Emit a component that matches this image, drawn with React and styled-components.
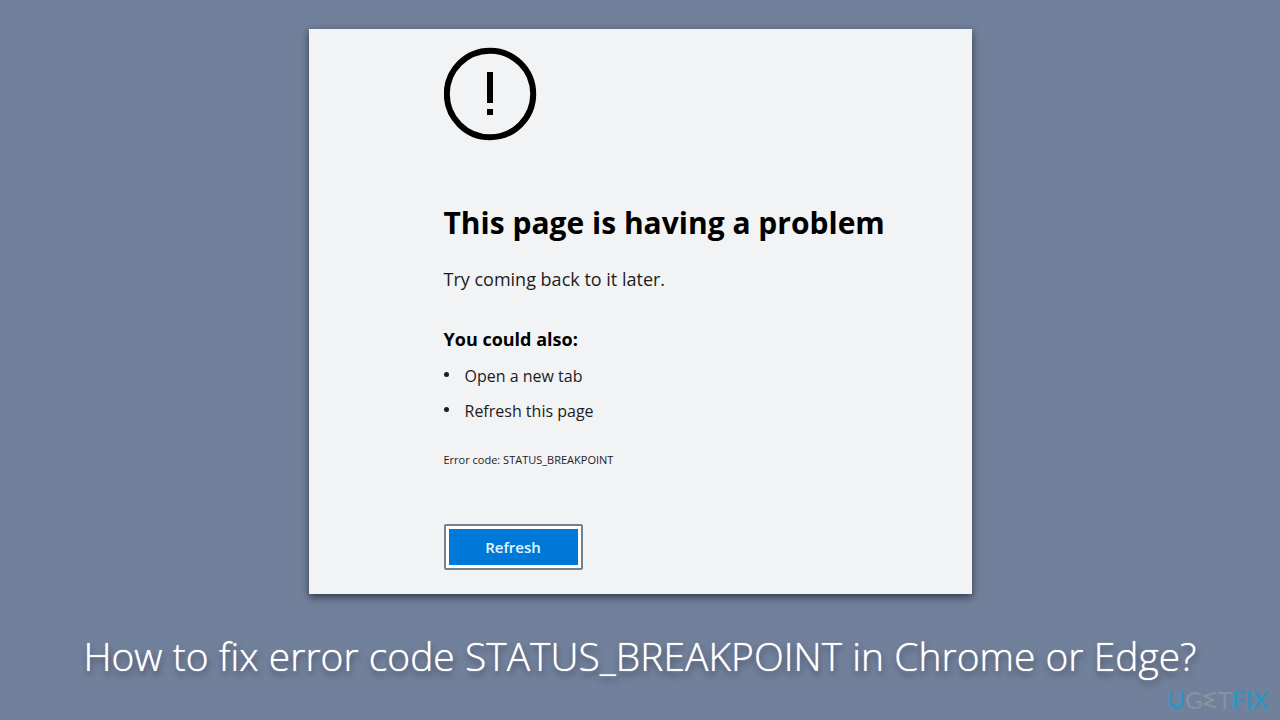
import React from 'react';
import styled, { createGlobalStyle } from 'styled-components';

function App () {
    return (
        <>
            <GlobalStyle />
            <Page>
                <ErrorPanel>
                    <AlertIcon viewBox="0 0 94 94" aria-hidden="true">
                        <circle cx="46" cy="47" r="43.2" fill="none" stroke="#000000" strokeWidth="6" />
                        <rect x="43" y="25" width="6" height="31" />
                        <rect x="43" y="62" width="6" height="6" />
                    </AlertIcon>
                    <Title>This page is having a problem</Title>
                    <Descr>Try coming back to it later.</Descr>
                    <Subtitle>You could also:</Subtitle>
                    <Tips>
                        <li>Open a new tab</li>
                        <li>Refresh this page</li>
                    </Tips>
                    <ErrorCode>Error code: STATUS_BREAKPOINT</ErrorCode>
                    <RefreshButton type="button">Refresh</RefreshButton>
                </ErrorPanel>
                <Caption>How to fix error code STATUS_BREAKPOINT in Chrome or Edge?</Caption>
                <Logo aria-label="UGETFIX">
                    <Accent>U</Accent>
                    <span>G</span>
                    <LogoMark viewBox="0 0 15 18" aria-hidden="true">
                        <path d="M14 1.5 L2.5 5 L11 9 L2.5 13 L14 16.5" />
                    </LogoMark>
                    <span>T</span>
                    <Accent>FIX</Accent>
                </Logo>
            </Page>
        </>
    )
}

export default App;


const GlobalStyle = createGlobalStyle`
    * {
        box-sizing: border-box;
    }

    body {
        margin: 0;
        background: #72819b;
        font-family: "Open Sans", "Noto Sans", sans-serif;
    }
`;

const Page = styled.div`
    min-height: 100vh;
    padding: 29px 12px 6px;
    display: flex;
    flex-direction: column;
    align-items: center;
`;

const ErrorPanel = styled.main`
    width: 100%;
    max-width: 663px;
    padding: 18px 24px 24px 135px;
    display: flex;
    flex-direction: column;
    align-items: flex-start;
    background: #f1f3f5;
    color: #000000;
    box-shadow: 0 3px 8px rgba(20, 24, 40, 0.7);
`;

const AlertIcon = styled.svg`
    width: 94px;
    height: 94px;
`;

const Title = styled.h1`
    margin: 60px 0 0;
    font-size: 30px;
    line-height: 44px;
    font-weight: 700;
`;

const Descr = styled.p`
    margin: 20px 0 0;
    font-size: 18px;
    line-height: 28px;
    color: #1c1c1e;
`;

const Subtitle = styled.h2`
    margin: 32px 0 0;
    font-size: 18px;
    line-height: 28px;
    font-weight: 700;
`;

const Tips = styled.ul`
    margin: 6px 0 0;
    padding: 0;
    list-style: none;
    font-size: 16px;
    line-height: 35px;
    color: #1c1c1e;

    li {
        display: flex;
        align-items: center;
        gap: 16px;
    }

    li::before {
        content: "";
        width: 5px;
        height: 5px;
        margin-bottom: 4px;
        border-radius: 50%;
        background: #1c1c1e;
    }
`;

const ErrorCode = styled.p`
    margin: 23px 0 0;
    font-size: 11px;
    line-height: 16px;
    color: #1c1c1e;
`;

const RefreshButton = styled.button`
    width: 139px;
    height: 46px;
    margin: 56px 0 0;
    padding: 0;
    border: 2px solid #748290;
    border-radius: 2px;
    background: #0078d7;
    box-shadow: inset 0 0 0 3px #ffffff;
    font-family: inherit;
    font-size: 15px;
    line-height: 20px;
    font-weight: 600;
    color: #e4f6ff;
    cursor: pointer;
`;

const Caption = styled.p`
    margin: 35px 0 0;
    font-size: 39px;
    line-height: 54px;
    font-weight: 300;
    text-align: center;
    color: #ffffff;
    text-shadow: 0 0 1px #ffffff, 1px 4px 6px rgba(30, 34, 50, 0.6);
`;

const Logo = styled.div`
    margin-top: auto;
    display: flex;
    align-self: flex-end;
    align-items: center;
    font-family: Lato, sans-serif;
    font-size: 24px;
    line-height: 28px;
    color: #8b929f;
`;

const Accent = styled.span`
    font-weight: 600;
    color: #2d95c3;
`;

const LogoMark = styled.svg`
    width: 15px;
    height: 18px;

    path {
        fill: none;
        stroke: #8b929f;
        stroke-width: 2;
    }
`;
